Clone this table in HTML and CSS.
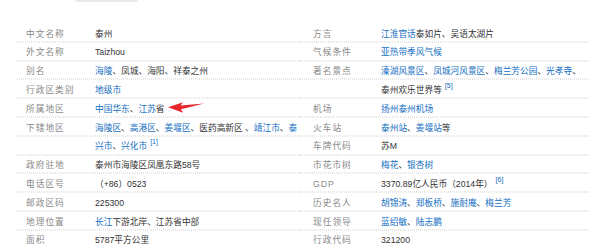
FILE: index.html
```html
<!DOCTYPE html>
<html lang="zh-CN">
<head>
<meta charset="utf-8">
<title>泰州</title>
<link rel="stylesheet" href="styles.css">
</head>
<body>
<div class="page">
  <div class="tab-edge"></div>
  <div class="basic-info">
    <dl class="info-col info-left">
      <dt>中文名称</dt><dd>泰州</dd>
      <dt>外文名称</dt><dd>Taizhou</dd>
      <dt class="ls-12">别名</dt><dd><a href="#">海陵</a>、凤城、海阳、祥泰之州</dd>
      <dt>行政区类别</dt><dd><a href="#">地级市</a></dd>
      <dt>所属地区</dt><dd><a href="#">中国华东</a>、<a href="#">江苏</a>省</dd>
      <dt>下辖地区</dt><dd><a href="#">海陵区</a>、<a href="#">高港区</a>、<a href="#">姜堰区</a>、医药高新区 、<a href="#">靖江市</a>、<a href="#">泰兴市</a>、<a href="#">兴化市</a><sup class="ref">[1]</sup></dd>
      <dt>政府驻地</dt><dd>泰州市海陵区凤凰东路58号</dd>
      <dt>电话区号</dt><dd>（+86）0523</dd>
      <dt>邮政区码</dt><dd>225300</dd>
      <dt>地理位置</dt><dd><a href="#">长江</a>下游北岸、江苏省中部</dd>
      <dt class="ls-7">面积</dt><dd>5787平方公里</dd>
    </dl>
    <dl class="info-col info-right">
      <dt class="ls-9">方言</dt><dd><a href="#">江淮官话</a>泰如片、吴语太湖片</dd>
      <dt>气候条件</dt><dd><a href="#">亚热带季风气候</a></dd>
      <dt>著名景点</dt><dd><a href="#">溱湖风景区</a>、<a href="#">凤城河风景区</a>、<a href="#">梅兰芳公园</a>、<a href="#">光孝寺</a>、泰州欢乐世界等<sup class="ref">[5]</sup></dd>
      <dt class="ls-10">机场</dt><dd><a href="#">扬州泰州机场</a></dd>
      <dt>火车站</dt><dd><a href="#">泰州站</a>、<a href="#">姜堰站</a>等</dd>
      <dt>车牌代码</dt><dd>苏M</dd>
      <dt>市花市树</dt><dd><a href="#">梅花</a>、<a href="#">银杏树</a></dd>
      <dt>GDP</dt><dd>3370.89亿人民币（2014年）<sup class="ref">[6]</sup></dd>
      <dt>历史名人</dt><dd><a href="#">胡锦涛</a>、<a href="#">郑板桥</a>、<a href="#">施耐庵</a>、<a href="#">梅兰芳</a></dd>
      <dt>现任领导</dt><dd><a href="#">蓝绍敏</a>、<a href="#">陆志鹏</a></dd>
      <dt>行政代码</dt><dd>321200</dd>
    </dl>
    <svg class="arrow" width="37" height="13" viewBox="0 0 37 13" aria-hidden="true">
      <path d="M0 6.2 L15 1.2 L12.6 4.6 L36 2.4 L13 8.2 L15.2 11.8 Z" fill="#e8262c"/>
    </svg>
  </div>
</div>
</body>
</html>
```

FILE: styles.css
```css
* {
  box-sizing: border-box;
}

html,
body {
  margin: 0;
  padding: 0;
  background: #fff;
}

body {
  width: 600px;
  height: 248px;
  overflow: hidden;
  font-family: "Liberation Sans", "Noto Sans CJK SC", sans-serif;
  font-size: 8.7px;
  color: #333;
  text-spacing-trim: space-all;
}

.tab-edge {
  margin-left: 75px;
  width: 63px;
  height: 2px;
  background: #e9e9e9;
  border-radius: 0 0 2px 2px;
}

.basic-info {
  position: relative;
  display: flex;
  margin-top: 22.7px;
  padding-left: 17px;
}

.info-col {
  margin: 0;
  display: grid;
  align-content: start;
  line-height: 18.8px;
  background:
    repeating-linear-gradient(to right, transparent 0 1px, #fff 1px 2px),
    repeating-linear-gradient(to bottom, transparent 0 17.8px, #cfcfcf 17.8px 18.8px) 0 -1.5px;
}

.info-left {
  width: 283px;
  padding-left: 9px;
  grid-template-columns: 69px 1fr;
}

.info-right {
  width: 290px;
  padding-left: 13px;
  grid-template-columns: 68px 1fr;
}

.info-col dt {
  color: #888;
  letter-spacing: 1px;
  white-space: nowrap;
}

.info-col dd {
  margin: 0;
}

.info-right dd {
  padding-right: 4px;
}

.ls-12 { letter-spacing: 12px; }
.ls-10 { letter-spacing: 10.3px; }
.ls-9 { letter-spacing: 9.3px; }
.ls-7 { letter-spacing: 7.3px; }

.info-col a {
  color: #136ec2;
  text-decoration: none;
}

.ref {
  font-size: 7px;
  line-height: 0;
  vertical-align: 5px;
  margin-left: 3px;
  color: #136ec2;
}

.arrow {
  position: absolute;
  left: 168px;
  top: 76.3px;
}
```
